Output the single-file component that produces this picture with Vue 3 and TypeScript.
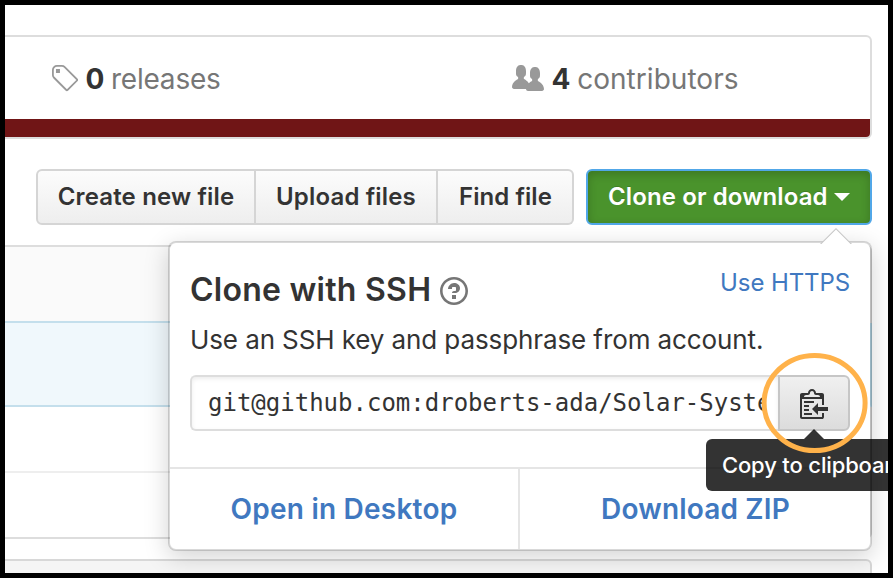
<script setup lang="ts">
interface Stat {
  count: number
  label: string
  icon: string
  width: number
}

const stats: Stat[] = [
  {
    count: 0,
    label: 'releases',
    width: 14,
    icon: 'M7.685 1.72a2.49 2.49 0 0 0-1.76-.726H3.48A2.5 2.5 0 0 0 .994 3.48v2.456c0 .656.269 1.292.726 1.76l6.024 6.024a.99.99 0 0 0 1.402 0l4.563-4.563a.99.99 0 0 0 0-1.402L7.685 1.72zM2.366 7.048A1.54 1.54 0 0 1 1.9 5.925V3.48c0-.874.716-1.58 1.58-1.58h2.456c.418 0 .825.159 1.123.467l6.104 6.094-4.702 4.702-6.094-6.114zm.626-4.066h1.989v1.989H2.982V2.982h.01z',
  },
  {
    count: 4,
    label: 'contributors',
    width: 16,
    icon: 'M16 12.999c0 .439-.45 1-1 1H7.995c-.539 0-.994-.447-.995-.999H1c-.54 0-1-.561-1-1 0-2.634 3-4 3-4s.229-.409 0-1c-.841-.621-1.058-.59-1-3 .058-2.419 1.367-3 2.5-3s2.442.58 2.5 3c.058 2.41-.159 2.379-1 3-.229.59 0 1 0 1s1.549.711 2.42 2.088C9.196 9.369 10 8.999 10 8.999s.229-.409 0-1c-.841-.62-1.058-.59-1-3 .058-2.419 1.367-3 2.5-3s2.437.581 2.495 3c.059 2.41-.158 2.38-1 3-.229.59 0 1 0 1s3.005 1.366 3.005 4z',
  },
]

const fileActions: string[] = ['Create new file', 'Upload files', 'Find file']
const cloneUrl = 'git@github.com:droberts-ada/Solar-Syste'
</script>

<template>
  <main class="page">
    <section class="summary">
      <ul class="stats">
        <li v-for="stat in stats" :key="stat.label" class="stat">
          <svg :width="stat.width * 2" height="32" :viewBox="`0 0 ${stat.width} 16`" class="stat-icon">
            <path :d="stat.icon" />
          </svg>
          <strong>{{ stat.count }}</strong>
          <span>{{ stat.label }}</span>
        </li>
      </ul>
      <div class="language-bar"></div>
    </section>

    <nav class="toolbar">
      <div class="btn-group">
        <button v-for="action in fileActions" :key="action" type="button" class="btn">{{ action }}</button>
      </div>
      <div class="clone">
        <button type="button" class="btn-clone">Clone or download<i class="caret"></i></button>

        <div class="popover">
          <svg class="arrow" width="32" height="16" viewBox="0 0 32 16">
            <path d="M0 16 16 0l16 16z" fill="#c8c8c8" />
            <path d="M1.5 16 16 1.5 30.5 16z" fill="#fff" />
          </svg>
          <div class="popover-body">
            <header class="popover-head">
              <h4>Clone with SSH</h4>
              <svg class="help" width="28" height="32" viewBox="0 0 14 16">
                <path d="M6 10h2v2H6v-2zm4-3.5C10 8.64 8 9 8 9H6c0-.55.45-1 1-1h.5c.28 0 .5-.22.5-.5v-1c0-.28-.22-.5-.5-.5h-1c-.28 0-.5.22-.5.5V7H4c0-1.5 1.5-3 3-3s3 1 3 2.5zM7 2.3c3.14 0 5.7 2.56 5.7 5.7s-2.56 5.7-5.7 5.7A5.71 5.71 0 0 1 1.3 8c0-3.14 2.56-5.7 5.7-5.7zM7 1C3.14 1 0 4.14 0 8s3.14 7 7 7 7-3.14 7-7-3.14-7-7-7z" />
              </svg>
              <a class="switch">Use HTTPS</a>
            </header>
            <p class="hint">Use an SSH key and passphrase from account.</p>
            <div class="url-group">
              <div class="url"><span>{{ cloneUrl }}</span></div>
              <button type="button" class="copy" aria-label="Copy to clipboard">
                <svg width="28" height="32" viewBox="0 0 14 16">
                  <path d="M2 13h4v1H2v-1zm5-6H2v1h5V7zm2 3V8l-3 3 3 3v-2h5v-2H9zM4.5 9H2v1h2.5V9zM2 12h2.5v-1H2v1zm9 1h1v2c-.02.28-.11.52-.3.7-.19.18-.42.28-.7.3H1c-.55 0-1-.45-1-1V4c0-.55.45-1 1-1h3c0-1.11.89-2 2-2 1.11 0 2 .89 2 2h3c.55 0 1 .45 1 1v5h-1V6H1v9h10v-2zM2 5h8c0-.55-.45-1-1-1H8c-.55 0-1-.45-1-1s-.45-1-1-1-1 .45-1 1-.45 1-1 1H3c-.55 0-1 .45-1 1z" />
                </svg>
                <span class="tooltip">Copy to clipboard</span>
                <svg class="ring" width="108" height="102" viewBox="0 0 108 102">
                  <ellipse cx="53.6" cy="51" rx="50.5" ry="47.6" />
                </svg>
              </button>
            </div>
          </div>
          <footer class="popover-foot">
            <a>Open in Desktop</a>
            <a>Download ZIP</a>
          </footer>
        </div>
      </div>
    </nav>

    <section class="files">
      <div class="row commit"></div>
      <div class="row notice"></div>
      <div class="row"></div>
      <div class="row"></div>
    </section>
    <section class="readme"></section>
  </main>
</template>

<style>
body {
  background: #fff;
}
</style>

<style scoped>
* {
  box-sizing: border-box;
}
.page {
  width: 893px;
  height: 578px;
  border: 5px solid #000;
  overflow: hidden;
  background: #fff;
  color: #333;
  font-family: Inter, "Liberation Sans", sans-serif;
  padding: 30px 16px 0 0;
}
button {
  font-family: inherit;
  margin: 0;
}
.summary {
  height: 104px;
  border: 2px solid #ddd;
  border-left: 0;
  border-radius: 0 6px 6px 0;
  overflow: hidden;
}
.stats {
  list-style: none;
  margin: 0;
  padding: 2px 0 0;
  height: 82px;
  display: grid;
  grid-template-columns: 461px 1fr;
}
.stat {
  display: flex;
  align-items: center;
  padding-left: 45px;
  font-size: 28px;
  line-height: 40px;
  letter-spacing: -0.2px;
  color: #767676;
}
.stat + .stat {
  padding-left: 46px;
  letter-spacing: 0.04px;
}
.stat-icon {
  fill: #999;
  margin-right: 7.5px;
}
.stat strong {
  font-weight: 650;
  color: #333;
  margin-right: 6.7px;
}
.language-bar {
  height: 18px;
  background: #701516;
}
.toolbar {
  margin-top: 30px;
  display: flex;
  justify-content: flex-end;
  gap: 12px;
}
.btn-group {
  display: grid;
  grid-template-columns: 220px 182px 136px;
}
.btn {
  height: 56px;
  padding: 0 0 1px;
  border: 2px solid #d5d5d5;
  border-left-width: 0;
  background: linear-gradient(#fcfcfc, #eee);
  color: #333;
  font-size: 24px;
  font-weight: 600;
  letter-spacing: 0.16px;
  white-space: nowrap;
}
.btn:first-child {
  border-left-width: 2px;
  border-radius: 6px 0 0 6px;
}
.btn:last-child {
  padding-left: 1px;
  border-radius: 0 6px 6px 0;
  letter-spacing: 0.05px;
}
.clone {
  position: relative;
}
.btn-clone {
  display: flex;
  align-items: center;
  width: 286px;
  height: 56px;
  padding: 0 0 1px 20px;
  border: 2px solid #51a7e8;
  border-radius: 6px;
  background: #4a932c;
  box-shadow: inset 0 3px 10px rgba(0, 0, 0, 0.2);
  color: #fff;
  font-size: 24px;
  font-weight: 600;
  letter-spacing: 0.12px;
  white-space: nowrap;
  text-shadow: 0 -1px 0 rgba(0, 0, 0, 0.15);
}
.caret {
  margin-left: 6px;
  border: 8px solid transparent;
  border-top-color: #fff;
  border-bottom-width: 0;
}
.popover {
  position: absolute;
  top: 72px;
  right: 0;
  z-index: 2;
  width: 704px;
  height: 310px;
  border: 2px solid rgba(0, 0, 0, 0.15);
  border-radius: 8px;
  background: #fff;
  background-clip: padding-box;
  box-shadow: 0 6px 24px rgba(0, 0, 0, 0.175);
}
.arrow {
  position: absolute;
  top: -15px;
  right: 18px;
}
.popover-body {
  height: 224px;
  padding: 20px 20px 0;
}
.popover-head {
  display: flex;
  align-items: center;
  height: 52px;
}
h4 {
  margin: 2px 0 0;
  font-size: 32px;
  font-weight: 600;
  line-height: 52px;
  letter-spacing: 0.25px;
}
.help {
  margin: 4px 0 0 8.5px;
  fill: #767676;
}
a {
  color: #4078c0;
}
.switch {
  align-self: flex-start;
  margin-left: auto;
  font-size: 24px;
  line-height: 39px;
  letter-spacing: -0.1px;
}
.hint {
  margin: 0 0 11px;
  font-size: 26px;
  line-height: 49px;
  letter-spacing: -0.1px;
  white-space: nowrap;
}
.url-group {
  display: flex;
  height: 56px;
}
.url {
  width: 588px;
  border: 2px solid #ddd;
  border-right: 0;
  border-radius: 6px 0 0 6px;
  padding: 0 12px 0 16px;
  box-shadow: inset 0 2px 4px rgba(0, 0, 0, 0.075);
  font: 24px/53px "DejaVu Sans Mono", monospace;
}
.url span {
  display: block;
  overflow: hidden;
  white-space: nowrap;
}
.copy {
  position: relative;
  width: 72px;
  padding: 0;
  display: flex;
  justify-content: center;
  align-items: center;
  border: 2px solid #c6c6c6;
  border-radius: 0 6px 6px 0;
  background: linear-gradient(#f0f0f0, #dcdcdc);
  fill: #333;
}
.tooltip {
  position: absolute;
  top: 62px;
  left: -74px;
  height: 52px;
  padding: 0 16px;
  border-radius: 6px;
  background: rgba(0, 0, 0, 0.8);
  color: #fff;
  font-size: 22px;
  font-weight: 500;
  line-height: 52px;
  letter-spacing: -0.15px;
  white-space: nowrap;
}
.tooltip::before {
  content: "";
  position: absolute;
  left: 98px;
  bottom: 100%;
  border: 10px solid transparent;
  border-top-width: 0;
  border-bottom-color: rgba(0, 0, 0, 0.8);
}
.ring {
  position: absolute;
  top: -25px;
  left: -19px;
  fill: none;
  stroke: #ffb24a;
  stroke-width: 5;
  pointer-events: none;
}
.popover-foot {
  display: grid;
  grid-template-columns: 348px 352px;
  height: 82px;
  border-top: 2px solid #e5e5e5;
}
.popover-foot a {
  font-size: 28px;
  font-weight: 600;
  line-height: 80px;
  letter-spacing: 0.22px;
  text-align: center;
}
.popover-foot a + a {
  border-left: 2px solid #e5e5e5;
  padding-left: 1px;
  letter-spacing: 0.18px;
}
.files {
  margin-top: 20px;
  height: 294px;
  border: 2px solid #ddd;
  border-left: 0;
  border-radius: 0 6px 6px 0;
}
.row {
  height: 66px;
  border-bottom: 2px solid #eee;
}
.row:last-child {
  border-bottom: 0;
}
.commit {
  height: 76px;
  background: #fafafa;
  border-bottom: 2px solid #c4dfec;
}
.notice {
  position: relative;
  height: 84px;
  margin-right: -2px;
  border-right: 2px solid #b4d6e6;
  border-bottom: 2px solid #c4dfec;
  background: #f0f8fc;
}
.readme {
  margin-top: 20px;
  height: 40px;
  border: 2px solid #d8d8d8;
  border-left: 0;
  border-radius: 0 6px 0 0;
  background: #f5f5f5;
}
</style>
